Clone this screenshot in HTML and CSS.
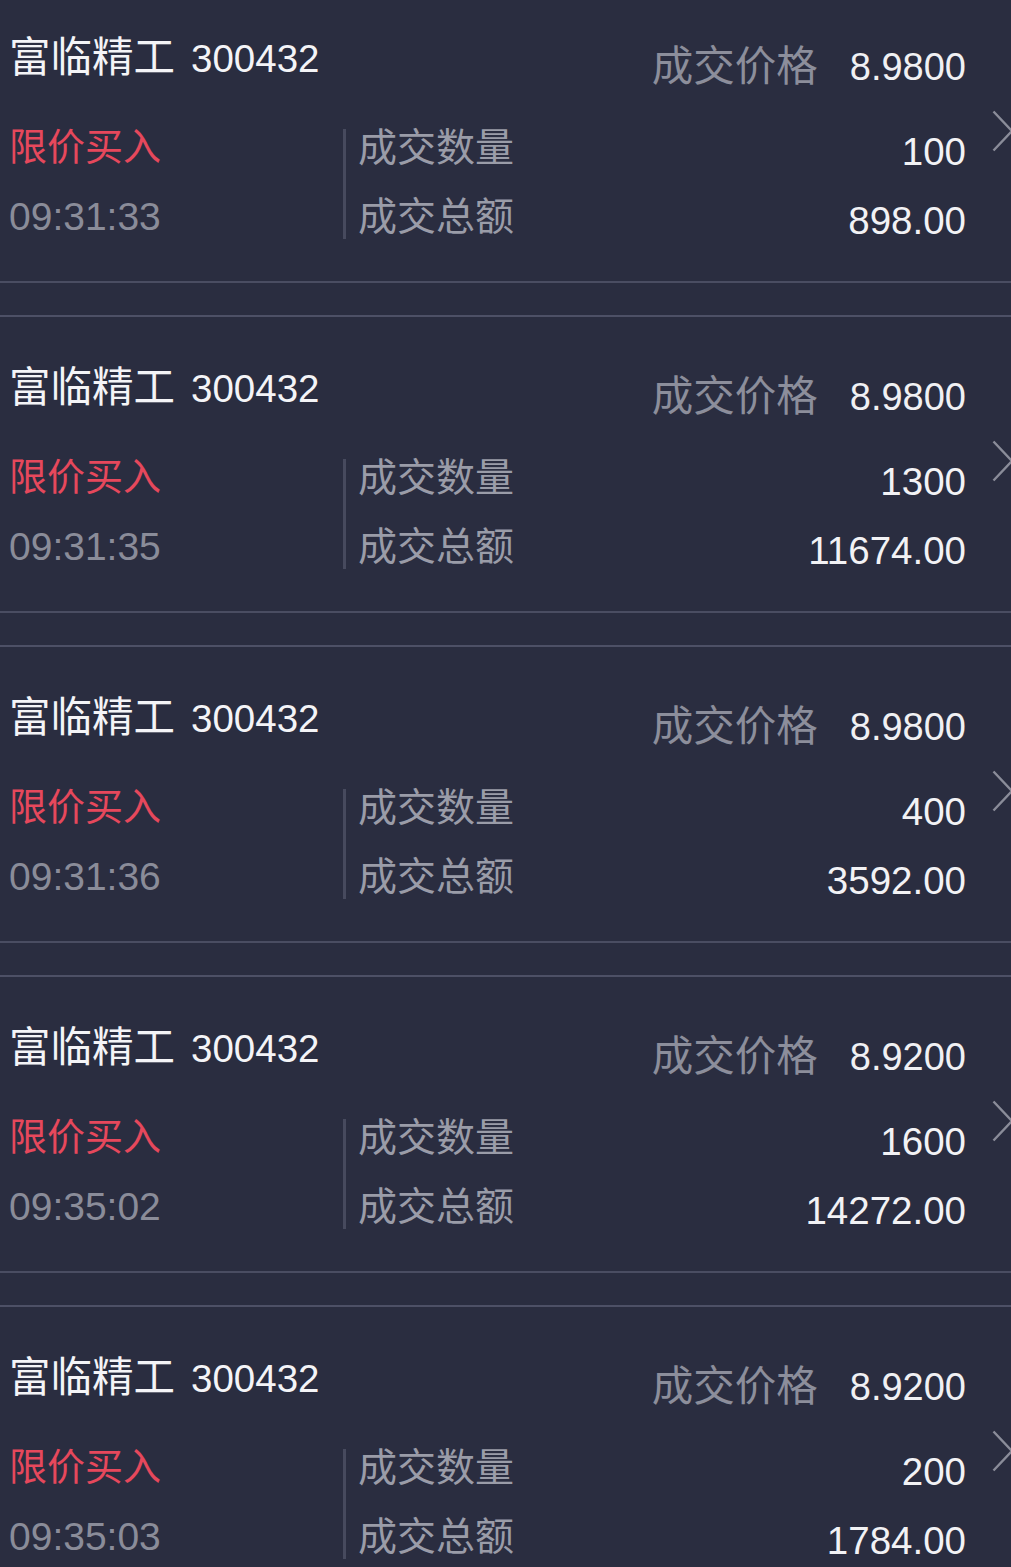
FILE: index.html
```html
<!DOCTYPE html>
<html lang="zh-CN">
<head>
<meta charset="utf-8">
<title>成交记录</title>
<link rel="stylesheet" href="styles.css">
</head>
<body>
<div class="list">
  <div class="trade">
    <div class="main">
      <div class="top">
        <div class="name">富临精工<span class="code">300432</span></div>
        <div class="price"><span class="plabel">成交价格</span><span class="pvalue">8.9800</span></div>
      </div>
      <div class="bottom">
        <div class="left"><div class="type">限价买入</div><div class="time">09:31:33</div></div>
        <div class="vline"></div>
        <div class="labels"><div>成交数量</div><div>成交总额</div></div>
        <div class="values"><div>100</div><div>898.00</div></div>
      </div>
    </div>
    <div class="chev"><svg width="22" height="42" viewBox="0 0 22 42"><polyline points="1.5,1.5 20,21 1.5,40.5" fill="none" stroke="#8a8c99" stroke-width="2.4"/></svg></div>
  </div>
  <div class="trade">
    <div class="main">
      <div class="top">
        <div class="name">富临精工<span class="code">300432</span></div>
        <div class="price"><span class="plabel">成交价格</span><span class="pvalue">8.9800</span></div>
      </div>
      <div class="bottom">
        <div class="left"><div class="type">限价买入</div><div class="time">09:31:35</div></div>
        <div class="vline"></div>
        <div class="labels"><div>成交数量</div><div>成交总额</div></div>
        <div class="values"><div>1300</div><div>11674.00</div></div>
      </div>
    </div>
    <div class="chev"><svg width="22" height="42" viewBox="0 0 22 42"><polyline points="1.5,1.5 20,21 1.5,40.5" fill="none" stroke="#8a8c99" stroke-width="2.4"/></svg></div>
  </div>
  <div class="trade">
    <div class="main">
      <div class="top">
        <div class="name">富临精工<span class="code">300432</span></div>
        <div class="price"><span class="plabel">成交价格</span><span class="pvalue">8.9800</span></div>
      </div>
      <div class="bottom">
        <div class="left"><div class="type">限价买入</div><div class="time">09:31:36</div></div>
        <div class="vline"></div>
        <div class="labels"><div>成交数量</div><div>成交总额</div></div>
        <div class="values"><div>400</div><div>3592.00</div></div>
      </div>
    </div>
    <div class="chev"><svg width="22" height="42" viewBox="0 0 22 42"><polyline points="1.5,1.5 20,21 1.5,40.5" fill="none" stroke="#8a8c99" stroke-width="2.4"/></svg></div>
  </div>
  <div class="trade">
    <div class="main">
      <div class="top">
        <div class="name">富临精工<span class="code">300432</span></div>
        <div class="price"><span class="plabel">成交价格</span><span class="pvalue">8.9200</span></div>
      </div>
      <div class="bottom">
        <div class="left"><div class="type">限价买入</div><div class="time">09:35:02</div></div>
        <div class="vline"></div>
        <div class="labels"><div>成交数量</div><div>成交总额</div></div>
        <div class="values"><div>1600</div><div>14272.00</div></div>
      </div>
    </div>
    <div class="chev"><svg width="22" height="42" viewBox="0 0 22 42"><polyline points="1.5,1.5 20,21 1.5,40.5" fill="none" stroke="#8a8c99" stroke-width="2.4"/></svg></div>
  </div>
  <div class="trade">
    <div class="main">
      <div class="top">
        <div class="name">富临精工<span class="code">300432</span></div>
        <div class="price"><span class="plabel">成交价格</span><span class="pvalue">8.9200</span></div>
      </div>
      <div class="bottom">
        <div class="left"><div class="type">限价买入</div><div class="time">09:35:03</div></div>
        <div class="vline"></div>
        <div class="labels"><div>成交数量</div><div>成交总额</div></div>
        <div class="values"><div>200</div><div>1784.00</div></div>
      </div>
    </div>
    <div class="chev"><svg width="22" height="42" viewBox="0 0 22 42"><polyline points="1.5,1.5 20,21 1.5,40.5" fill="none" stroke="#8a8c99" stroke-width="2.4"/></svg></div>
  </div>
</div>
</body>
</html>
```

FILE: styles.css
```css
html, body {
  margin: 0;
  padding: 0;
  background: #2a2d40;
  overflow: hidden;
}
body {
  font-family: "Liberation Sans", "Noto Sans CJK SC", sans-serif;
  width: 1011px;
  height: 1567px;
}
.list {
  display: flex;
  flex-direction: column;
}
.trade {
  display: flex;
  align-items: center;
  padding: 41px 0 30px 9px;
  border-top: 2px solid #4d5066;
  border-bottom: 2px solid #4a4d62;
  margin-bottom: 32px;
  overflow: hidden;
}
.trade:first-child {
  border-top: none;
  padding-top: 28px;
}
.main {
  width: 957px;
  flex-shrink: 0;
  display: flex;
  flex-direction: column;
}
.top {
  display: flex;
  justify-content: space-between;
  height: 60px;
}
.name {
  color: #f4f4f7;
  font-size: 41.5px;
  line-height: 60px;
}
.code {
  font-size: 38.5px;
  margin-left: 16px;
}
.price {
  display: flex;
  align-items: center;
  height: 60px;
  margin-top: 9px;
}
.plabel {
  color: #8c8e9b;
  font-size: 41.5px;
  line-height: 60px;
  margin-right: 32px;
}
.pvalue {
  color: #f0f0f3;
  font-size: 38px;
  line-height: 60px;
}
.bottom {
  display: flex;
  margin-top: 25px;
  height: 138px;
}
.left {
  width: 334px;
  flex-shrink: 0;
  font-size: 38px;
  line-height: 69px;
}
.type {
  color: #e6485c;
}
.time {
  color: #8a8c99;
  font-size: 39px;
}
.vline {
  width: 3px;
  height: 110px;
  margin-top: 16px;
  background: #474a5e;
  flex-shrink: 0;
}
.labels {
  margin-left: 12px;
  color: #9a9ca8;
  font-size: 39px;
  line-height: 69px;
}
.values {
  flex: 1;
  text-align: right;
  color: #f2f2f5;
  font-size: 38.5px;
  line-height: 69px;
  padding-top: 4px;
}
.chev {
  flex-shrink: 0;
  width: 45px;
  padding-left: 26px;
  box-sizing: border-box;
  display: flex;
  align-items: center;
  margin-top: -18px;
}
.chev svg {
  display: block;
  flex-shrink: 0;
}
```
